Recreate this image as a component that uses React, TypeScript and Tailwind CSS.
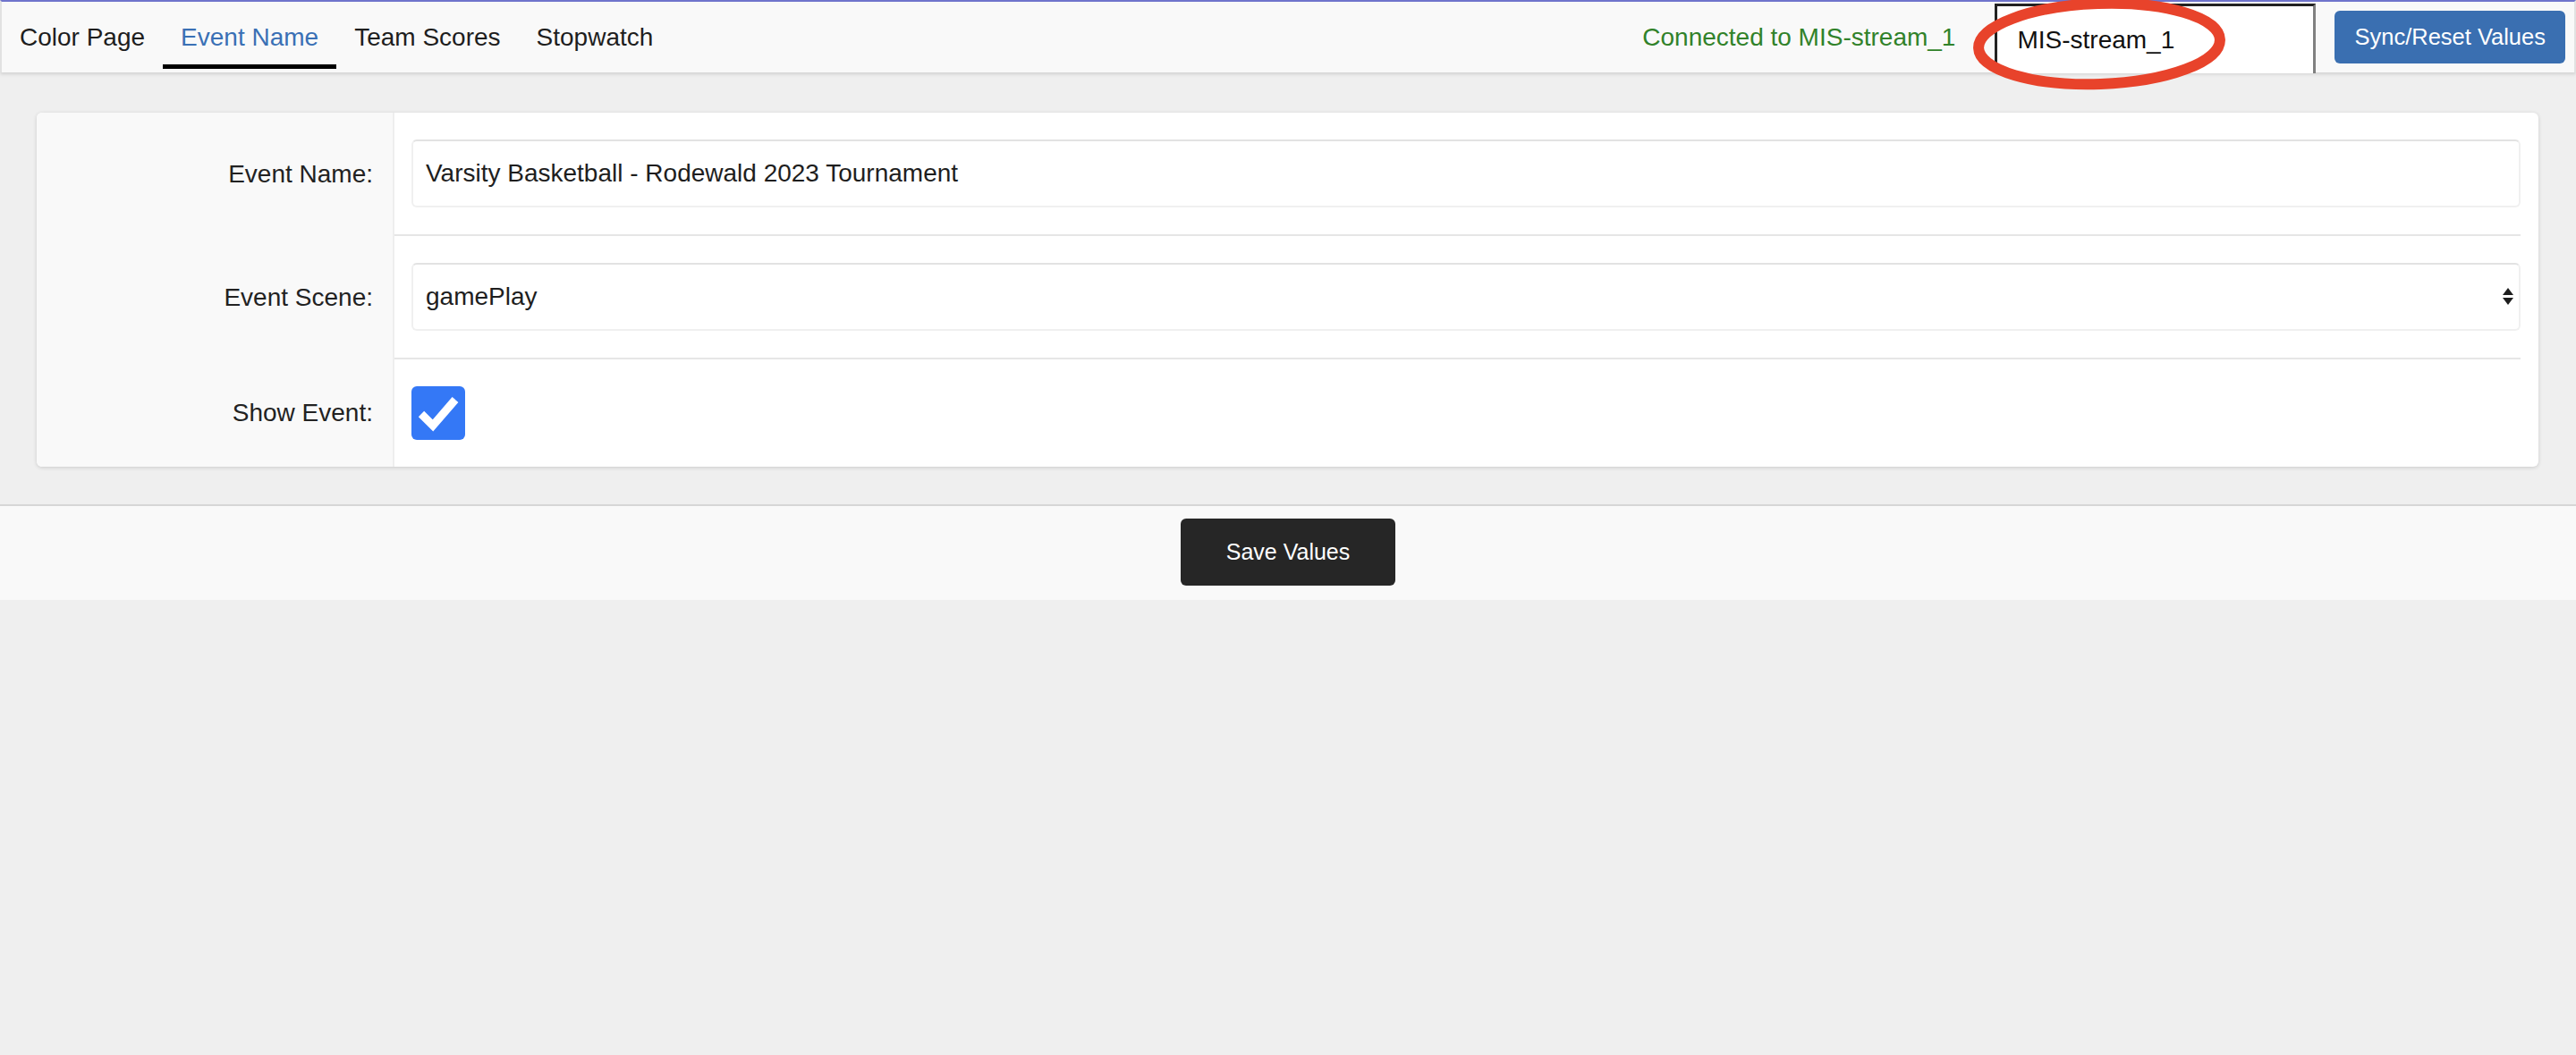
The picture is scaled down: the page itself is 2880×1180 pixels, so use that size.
import { useState } from 'react'

const tabs = ['Color Page', 'Event Name', 'Team Scores', 'Stopwatch']

const FieldRow = ({ label, last, children }: { label: string; last?: boolean; children: React.ReactNode }) => (
  <div className="flex">
    <div className="w-[400px] shrink-0 bg-[#f9f9f9] border-r-2 border-[#eeeeee] flex items-center justify-end pr-[22px] text-[#222]">
      {label}
    </div>
    <div className={`flex-1 mr-[20px] pl-[19px] py-[30px] ${last ? '' : 'border-b-2 border-[#e6e6e6]'}`}>
      {children}
    </div>
  </div>
)

export default function App() {
  const [active] = useState('Event Name')
  const [checked, setChecked] = useState(true)

  return (
    <div className="min-h-screen bg-[#efefef] text-[28px] text-[#222]" style={{ fontFamily: '"Liberation Sans", Arial, sans-serif' }}>
      {/* Top nav */}
      <div className="relative z-10 h-[81px] flex border-t-2 border-[#6f74cc] bg-[#f9f9f9] border-x-2 border-x-[#e2e2e2] shadow-[0_2px_4px_rgba(0,0,0,0.13)]">
        <div className="flex">
          {tabs.map((t) => (
            <div
              key={t}
              className={`relative flex items-center px-[20px] ${t === active ? 'text-[#3a70b5]' : 'text-[#1e1e1e]'}`}
            >
              {t}
              {t === active && <span className="absolute left-0 right-0 bottom-[4px] h-[5px] bg-black" />}
            </div>
          ))}
        </div>

        <div className="ml-auto flex items-center">
          <span className="text-[#31822a] mr-[44px]">Connected to MIS-stream_1</span>
          <div className="relative self-start mt-[2px]">
            <input
              defaultValue="MIS-stream_1"
              className="block w-[359px] h-[78px] bg-white border-t-[3px] border-l-[3px] border-r-[3px] border-t-[#222] border-l-[#222] border-r-[#808080] pl-[22px] text-[#111] outline-none"
            />
            {/* annotation */}
            <svg
              className="absolute left-[-30px] top-[-8px] pointer-events-none"
              width="294"
              height="106"
              viewBox="0 0 294 106"
            >
              <ellipse cx="147" cy="53" rx="135" ry="45" fill="none" stroke="#e8432b" strokeWidth="12" transform="rotate(-2 147 53)" />
            </svg>
          </div>
          <button className="ml-[21px] mr-[10px] h-[59px] px-[22px] rounded-[6px] bg-[#3a6fb1] text-white text-[25.5px]">
            Sync/Reset Values
          </button>
        </div>
      </div>

      {/* Form card */}
      <div className="pt-[45px] pl-[41px] pr-[42px]">
        <div className="rounded-[6px] bg-white overflow-hidden shadow-[0_1px_4px_rgba(0,0,0,0.16)]">
          <FieldRow label="Event Name:">
            <input
              defaultValue="Varsity Basketball - Rodewald 2023 Tournament"
              className="block w-full h-[76px] rounded-[6px] border-2 border-[#f0f0f0] border-t-[#e2e2e2] pl-[14px] text-[#1e1e1e] outline-none"
            />
          </FieldRow>
          <FieldRow label="Event Scene:">
            <div className="flex items-center w-full h-[76px] rounded-[6px] border-2 border-[#f0f0f0] border-t-[#e2e2e2] pl-[14px] pr-[6px] text-[#1e1e1e]">
              <span className="flex-1">gamePlay</span>
              <svg width="12" height="20" viewBox="0 0 12 20">
                <path d="M6 0 L12 8 L0 8 Z" fill="#1e1e1e" />
                <path d="M0 11 L12 11 L6 19 Z" fill="#1e1e1e" />
              </svg>
            </div>
          </FieldRow>
          <FieldRow label="Show Event:" last>
            <button
              onClick={() => setChecked(!checked)}
              className="w-[60px] h-[60px] rounded-[6px] bg-[#3478f6] flex items-center justify-center"
            >
              {checked && (
                <svg width="60" height="60" viewBox="0 0 60 60">
                  <path d="M11 31 L24 44 L49 15" fill="none" stroke="white" strokeWidth="9" />
                </svg>
              )}
            </button>
          </FieldRow>
        </div>
      </div>

      {/* Footer */}
      <div className="mt-[42px] border-t-2 border-[#d6d6d6] bg-[#f9f9f9] pt-[14px] pb-[16px] flex justify-center">
        <button className="w-[240px] h-[75px] rounded-[6px] bg-[#262626] text-white text-[25px]">Save Values</button>
      </div>
    </div>
  )
}
